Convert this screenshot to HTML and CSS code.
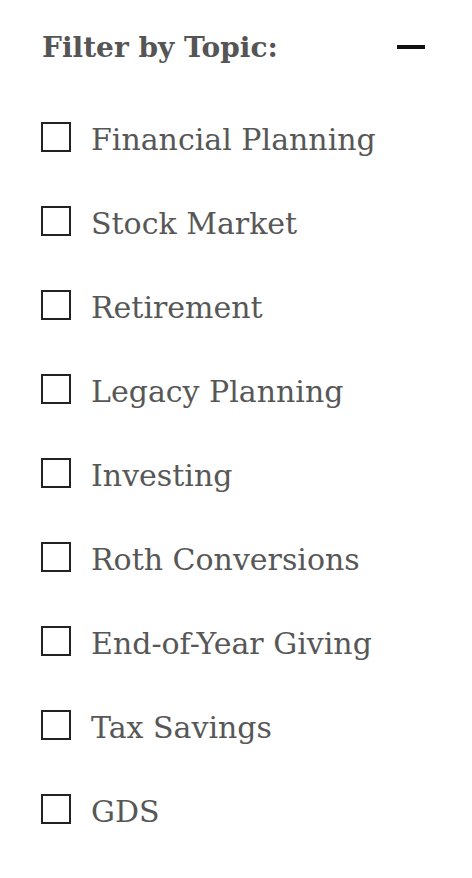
FILE: index.html
```html
<!DOCTYPE html>
<html>
<head>
<meta charset="utf-8">
<link rel="stylesheet" href="styles.css">
</head>
<body>
<div class="filter">
  <div class="filter-head">
    <h2 class="filter-title">Filter by Topic:</h2>
    <span class="toggle" aria-label="collapse"></span>
  </div>
  <ul class="topics">
    <li class="topic"><span class="box"></span><span class="label">Financial Planning</span></li>
    <li class="topic"><span class="box"></span><span class="label">Stock Market</span></li>
    <li class="topic"><span class="box"></span><span class="label">Retirement</span></li>
    <li class="topic"><span class="box"></span><span class="label">Legacy Planning</span></li>
    <li class="topic"><span class="box"></span><span class="label">Investing</span></li>
    <li class="topic"><span class="box"></span><span class="label">Roth Conversions</span></li>
    <li class="topic"><span class="box"></span><span class="label">End-of-Year Giving</span></li>
    <li class="topic"><span class="box"></span><span class="label">Tax Savings</span></li>
    <li class="topic"><span class="box"></span><span class="label">GDS</span></li>
  </ul>
</div>
</body>
</html>
```
FILE: styles.css
```css
html, body {
  margin: 0;
  padding: 0;
  background: #fff;
}
.filter {
  padding: 26px 47px 0 41px;
  font-family: "DejaVu Serif", "Liberation Serif", serif;
  color: #555;
}
.filter-head {
  display: flex;
  justify-content: space-between;
  align-items: center;
  height: 42px;
  padding-left: 1px;
}
.filter-title {
  margin: 0;
  font-size: 28px;
  font-weight: bold;
  color: #555;
}
.toggle {
  width: 28px;
  height: 4px;
  background: #111;
}
.topics {
  list-style: none;
  margin: 54px 0 0 0;
  padding: 0;
  display: flex;
  flex-direction: column;
  gap: 54px;
}
.topic {
  display: flex;
  align-items: center;
  height: 30px;
}
.box {
  width: 26px;
  height: 26px;
  border: 2px solid #222;
  flex: none;
}
.label {
  margin-left: 20px;
  padding-top: 6px;
  font-size: 30px;
  line-height: 1;
  color: #575757;
}
```
